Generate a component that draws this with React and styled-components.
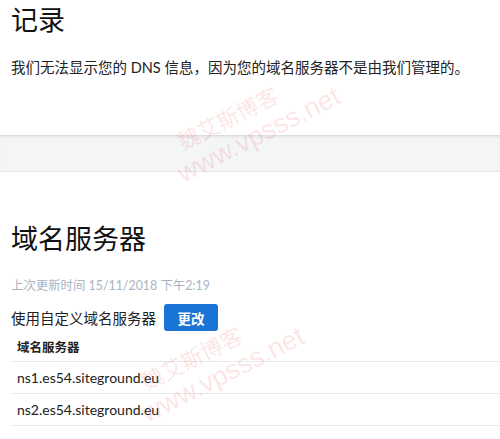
import React from 'react';
import styled, { createGlobalStyle } from 'styled-components';

const GlobalStyle = createGlobalStyle`
    body {
        margin: 0;
        background: #fff;
        font-family: Lato, "Noto Sans CJK SC", sans-serif;
        color: #222;
    }
`

const servers = ['ns1.es54.siteground.eu', 'ns2.es54.siteground.eu']

function App() {
    return (
        <Page>
            <GlobalStyle />
            <Section first>
                <Title>记录</Title>
                <Text>我们无法显示您的 DNS 信息，因为您的域名服务器不是由我们管理的。</Text>
            </Section>
            <Band />
            <Section>
                <Heading>域名服务器</Heading>
                <Meta>上次更新时间 15/11/2018 下午2:19</Meta>
                <ActionRow>
                    <span>使用自定义域名服务器</span>
                    <Button>更改</Button>
                </ActionRow>
                <Table>
                    <thead>
                        <tr><th>域名服务器</th></tr>
                    </thead>
                    <tbody>
                        {servers.map(s => (
                            <tr key={s}><td>{s}</td></tr>
                        ))}
                    </tbody>
                </Table>
            </Section>
            <Watermark top={110} left={146}>
                <span>魏艾斯博客</span>
                <span>www.vpsss.net</span>
            </Watermark>
            <Watermark top={350} left={110}>
                <span>魏艾斯博客</span>
                <span>www.vpsss.net</span>
            </Watermark>
        </Page>
    )
}

export default App

const Page = styled.div`
    position: relative;
    width: 500px;
    height: 439px;
    overflow: hidden;
`
const Section = styled.section`
    padding: 0 0 0 11px;
    min-height: ${props => props.first ? '135px' : 'auto'};
    box-sizing: border-box;
    padding-top: ${props => props.first ? '2px' : '49px'};
`
const Title = styled.h1`
    margin: 0;
    font-size: 27px;
    line-height: 36px;
    font-weight: 400;
    color: #111;
`
const Text = styled.p`
    margin: 20px 0 0;
    font-size: 14.5px;
    line-height: 20px;
    color: #222;
`
const Band = styled.div`
    background: #f4f5f7;
    border-top: 1px solid #dcdde3;
    border-bottom: 1px solid #e6e7ea;
    box-shadow: inset 0 2px 2px rgba(0, 0, 0, 0.05);
    box-sizing: border-box;
    height: 37px;
`
const Heading = styled.h2`
    margin: 0;
    font-size: 27px;
    line-height: 36px;
    font-weight: 400;
    color: #111;
`
const Meta = styled.div`
    margin-top: 20px;
    font-size: 12.4px;
    line-height: 18px;
    color: #a9b4c2;
`
const ActionRow = styled.div`
    display: flex;
    align-items: center;
    gap: 8px;
    margin-top: 9px;
    font-size: 14.5px;
    color: #222;
`
const Button = styled.button`
    width: 54px;
    height: 27px;
    border: none;
    border-radius: 3px;
    background: #1a74d6;
    color: #fff;
    font-family: inherit;
    font-size: 13.5px;
    font-weight: 700;
    cursor: pointer;
`
const Table = styled.table`
    width: 100%;
    border-collapse: collapse;
    th, td {
        text-align: left;
        padding: 0 0 0 6px;
        border-bottom: 1px solid #e6e8eb;
    }
    th {
        height: 30px;
        font-size: 12.5px;
        font-weight: 700;
        color: #222;
    }
    td {
        height: 31px;
        font-size: 14px;
        color: #222;
    }
`
const Watermark = styled.div`
    position: absolute;
    top: ${props => props.top}px;
    left: ${props => props.left}px;
    display: flex;
    flex-direction: column;
    align-items: flex-start;
    transform: rotate(-27deg);
    transform-origin: left top;
    color: rgba(235, 90, 90, 0.16);
    pointer-events: none;
    line-height: 1;
    span:first-child {
        font-size: 22px;
        margin-left: 14px;
        margin-top: 34px;
    }
    span:last-child {
        font-family: "Liberation Sans", sans-serif;
        font-size: 27px;
        margin-top: 4px;
    }
`
